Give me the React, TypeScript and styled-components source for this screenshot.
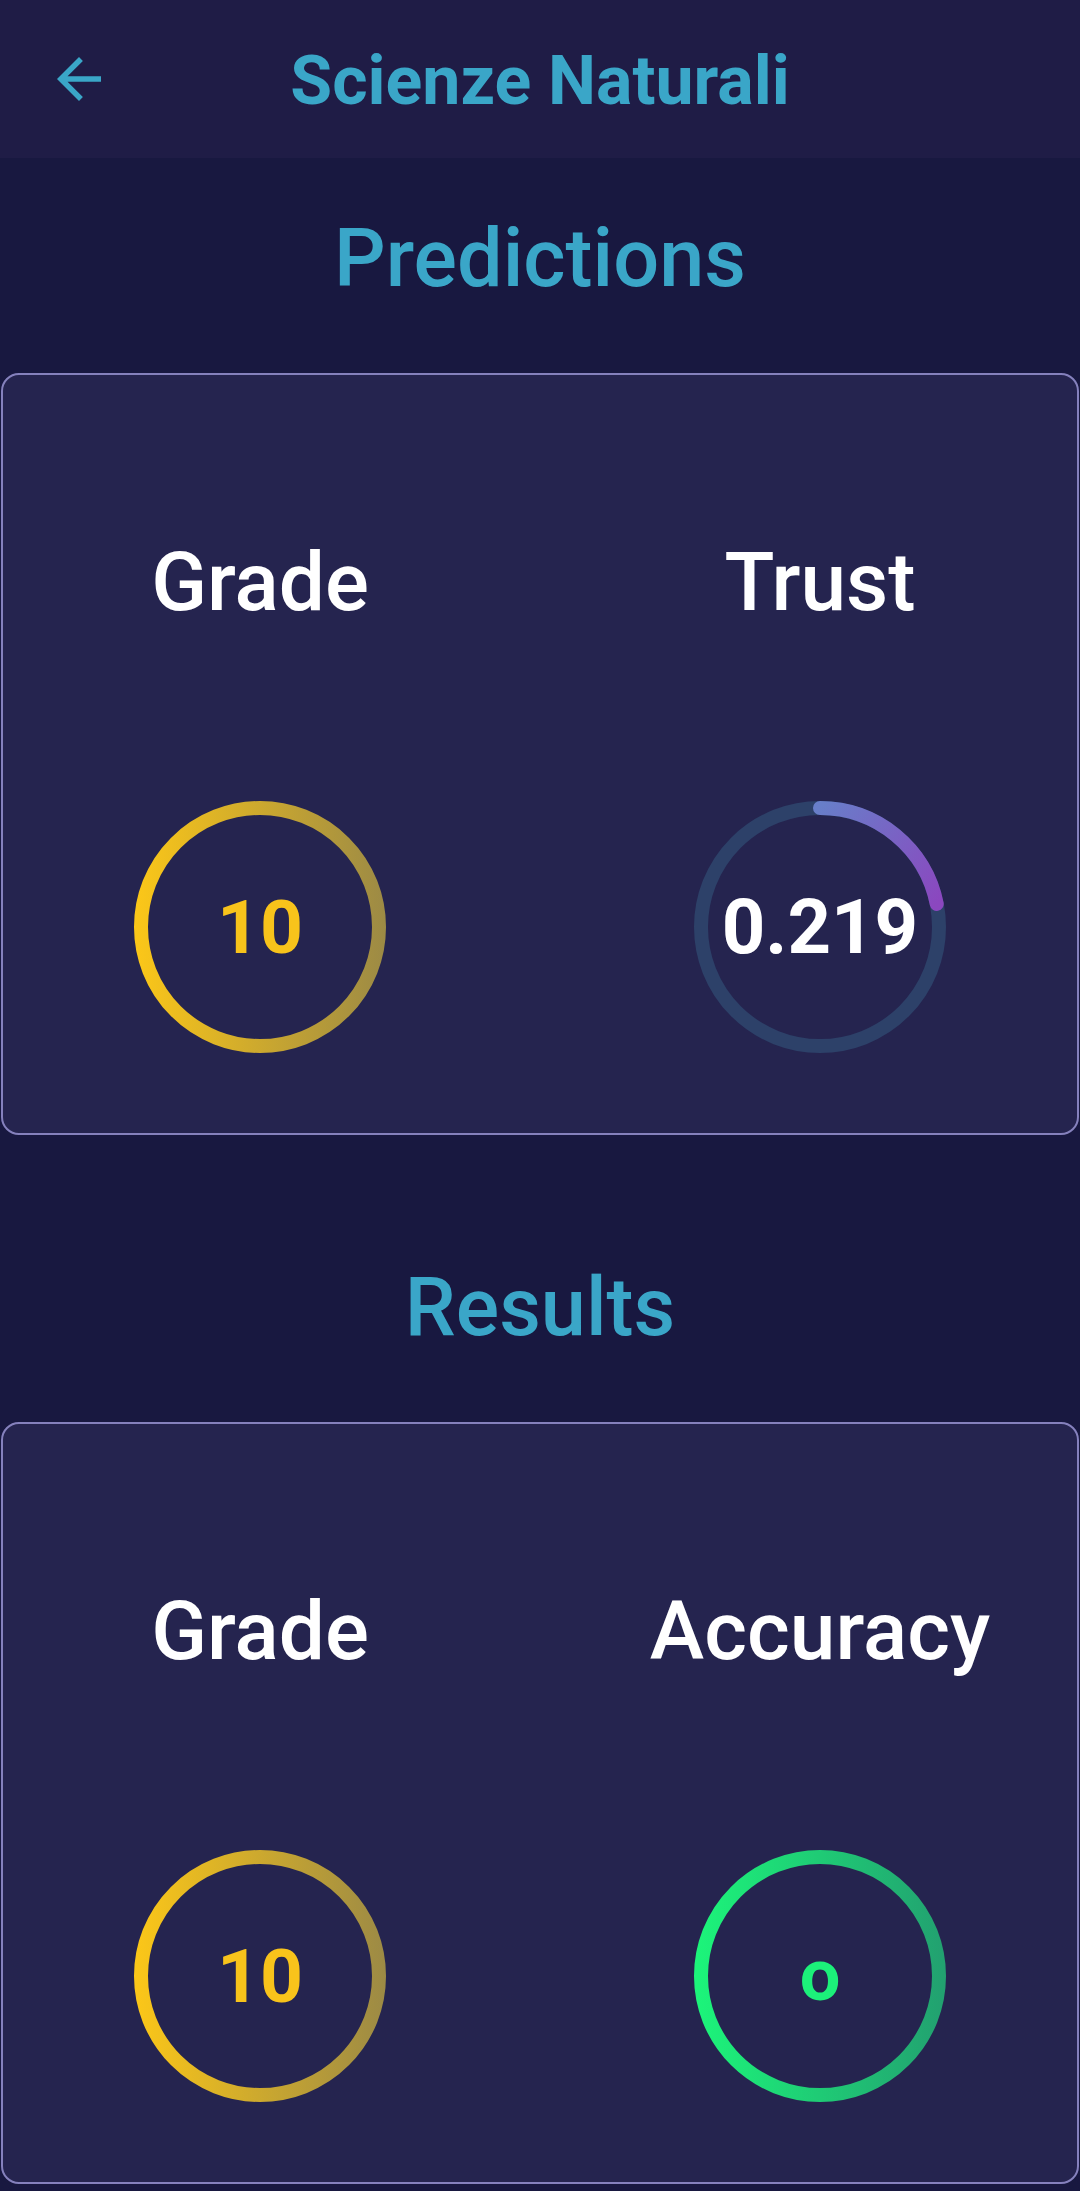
import React from "react";
import styled, { createGlobalStyle } from "styled-components";

const GlobalStyle = createGlobalStyle`
  html, body {
    margin: 0;
    padding: 0;
    background: #181840;
  }
  body {
    font-family: Roboto, "Noto Sans", "Liberation Sans", sans-serif;
    min-height: 2191px;
  }
  * { box-sizing: border-box; }
`;

const Page = styled.div`
  display: flex;
  flex-direction: column;
  background: #181840;
  min-height: 2191px;
`;

const Header = styled.header`
  height: 158px;
  background: #1f1c46;
  display: grid;
  grid-template-columns: 1fr auto 1fr;
  align-items: center;
`;

const BackButton = styled.button`
  justify-self: start;
  margin-left: 46px;
  width: 66px;
  height: 66px;
  padding: 0;
  border: none;
  background: transparent;
  display: flex;
  color: #3aa6c8;
  svg { width: 66px; height: 66px; fill: currentColor; }
`;

const Title = styled.h1`
  margin: 0;
  padding-top: 3px;
  font-size: 68px;
  line-height: 1;
  font-weight: 700;
  color: #3aa6c8;
  letter-spacing: 0;
`;

const SectionTitle = styled.h2<{ $top: number }>`
  margin: 0;
  padding-top: ${(p) => p.$top}px;
  padding-bottom: 74px;
  text-align: center;
  font-size: 81px;
  line-height: 1;
  font-weight: 500;
  color: #3aa6c8;
`;

const Card = styled.section`
  margin: 0 1px;
  background: #25244f;
  border: 2px solid #8581bd;
  border-radius: 18px;
  padding: 166px 0 80px;
  display: flex;
  justify-content: center;
  gap: 160px;
`;

const Column = styled.div`
  width: 400px;
  display: flex;
  flex-direction: column;
  align-items: center;
  gap: 178px;
`;

const Label = styled.div`
  font-size: 82px;
  line-height: 1;
  font-weight: 500;
  color: #ffffff;
  white-space: nowrap;
`;

const Gauge = styled.div`
  width: 252px;
  height: 252px;
  display: grid;
  place-items: center;
  > * { grid-area: 1 / 1; }
  svg { width: 252px; height: 252px; display: block; }
`;

const Value = styled.span<{ $color: string; $size: number }>`
  font-size: ${(p) => p.$size}px;
  line-height: 1;
  font-weight: 700;
  color: ${(p) => p.$color};
`;

const ArrowBack = () => (
  <svg viewBox="0 0 24 24" aria-hidden="true">
    <path d="M20 11H7.83l5.59-5.59L12 4l-8 8 8 8 1.41-1.41L7.83 13H20v-2z" />
  </svg>
);

type RingProps = { id: string; from: string; to: string; value: string; color: string; size: number };

const GradientRing = ({ id, from, to, value, color, size }: RingProps) => (
  <Gauge>
    <svg viewBox="0 0 252 252">
      <defs>
        <linearGradient id={id} x1="0" y1="0" x2="252" y2="0" gradientUnits="userSpaceOnUse">
          <stop offset="0" stopColor={from} />
          <stop offset="1" stopColor={to} />
        </linearGradient>
      </defs>
      <circle cx="126" cy="126" r="119" fill="none" stroke={`url(#${id})`} strokeWidth="14" />
    </svg>
    <Value $color={color} $size={size}>{value}</Value>
  </Gauge>
);

const ProgressRing = ({ progress }: { progress: number }) => {
  const r = 119;
  const a = progress * 2 * Math.PI;
  const ex = 126 + r * Math.sin(a);
  const ey = 126 - r * Math.cos(a);
  const large = progress > 0.5 ? 1 : 0;
  return (
    <Gauge>
      <svg viewBox="0 0 252 252">
        <defs>
          <linearGradient id="trustGrad" x1="126" y1="7" x2="243" y2="103" gradientUnits="userSpaceOnUse">
            <stop offset="0" stopColor="#687ec9" />
            <stop offset="1" stopColor="#8b47bf" />
          </linearGradient>
        </defs>
        <circle cx="126" cy="126" r={r} fill="none" stroke="#2d4169" strokeWidth="14" />
        <path
          d={`M126 7 A${r} ${r} 0 ${large} 1 ${ex.toFixed(2)} ${ey.toFixed(2)}`}
          fill="none"
          stroke="url(#trustGrad)"
          strokeWidth="14"
          strokeLinecap="round"
        />
      </svg>
      <Value $color="#ffffff" $size={76}>{progress.toFixed(3)}</Value>
    </Gauge>
  );
};

export default function App() {
  return (
    <>
      <GlobalStyle />
      <Page>
        <Header>
          <BackButton aria-label="Back">
            <ArrowBack />
          </BackButton>
          <Title>Scienze Naturali</Title>
          <div />
        </Header>

        <SectionTitle $top={60}>Predictions</SectionTitle>
        <Card>
          <Column>
            <Label>Grade</Label>
            <GradientRing id="g1" from="#fcc718" to="#9c8a45" value="10" color="#f8c31b" size={75} />
          </Column>
          <Column>
            <Label>Trust</Label>
            <ProgressRing progress={0.219} />
          </Column>
        </Card>

        <SectionTitle $top={132}>Results</SectionTitle>
        <Card>
          <Column>
            <Label>Grade</Label>
            <GradientRing id="g2" from="#fcc718" to="#9c8a45" value="10" color="#f8c31b" size={75} />
          </Column>
          <Column>
            <Label>Accuracy</Label>
            <GradientRing id="g3" from="#1cf57a" to="#22a070" value="o" color="#1cf07a" size={72} />
          </Column>
        </Card>
      </Page>
    </>
  );
}
